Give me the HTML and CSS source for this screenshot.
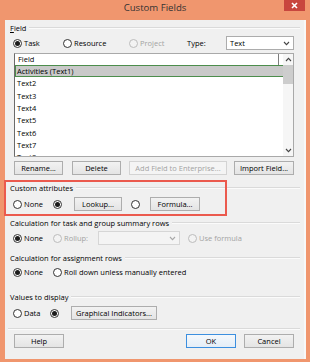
FILE: index.html
```html
<!DOCTYPE html>
<html>
<head>
<meta charset="utf-8">
<title>Custom Fields</title>
<link rel="stylesheet" href="styles.css">
</head>
<body>
<div class="window">
  <div class="titlebar">
    <span></span>
    <span class="title">Custom Fields</span>
    <span class="close"><svg width="7" height="7" viewBox="0 0 7 7"><path d="M1 1 L6 6 M6 1 L1 6" stroke="#fff" stroke-width="1.6" fill="none"/></svg></span>
  </div>
  <div class="dialog">
    <div class="head h-field"><span><u>F</u>ield</span><i class="line"></i></div>
    <div class="row r-field">
      <label class="opt w-task"><span class="radio on"></span>Task</label>
      <label class="opt w-res"><span class="radio"></span>Resource</label>
      <label class="opt w-proj dis"><span class="radio off"></span>Project</label>
      <span class="typelbl">Type:</span>
      <div class="select sel-type"><span>Text</span><svg width="7" height="5" viewBox="0 0 7 5"><polyline points="1,1 3.5,3.6 6,1" stroke="#444" stroke-width="1.1" fill="none"/></svg></div>
    </div>
    <div class="list">
      <div class="list-main">
        <div class="list-head"><span>Field</span></div>
        <div class="item sel">Activities (Text1)</div>
        <div class="item">Text2</div>
        <div class="item">Text3</div>
        <div class="item">Text4</div>
        <div class="item">Text5</div>
        <div class="item">Text6</div>
        <div class="item">Text7</div>
        <div class="item">Text8</div>
      </div>
      <div class="sb">
        <div class="sb-btn"><svg width="7" height="5" viewBox="0 0 7 5"><polyline points="1,4 3.5,1.4 6,4" stroke="#444" stroke-width="1.1" fill="none"/></svg></div>
        <div class="sb-thumb"></div>
        <div class="sb-track"></div>
        <div class="sb-btn"><svg width="7" height="5" viewBox="0 0 7 5"><polyline points="1,1 3.5,3.6 6,1" stroke="#444" stroke-width="1.1" fill="none"/></svg></div>
      </div>
    </div>
    <div class="row r-listbtns">
      <button class="btn b-rename">Rename...</button>
      <button class="btn b-delete">Delete</button>
      <button class="btn b-add dis-btn">Add Field to Enterprise...</button>
      <button class="btn b-import">Import Field...</button>
    </div>
    <div class="custom">
      <div class="head"><span>Custom attributes</span><i class="line"></i></div>
      <div class="row r-custom">
        <label class="opt w-none"><span class="radio"></span>None</label>
        <label class="opt w-ronly"><span class="radio on"></span></label>
        <button class="btn b-lookup">Lookup...</button>
        <label class="opt w-ronly2"><span class="radio"></span></label>
        <button class="btn b-formula">Formula...</button>
      </div>
      <div class="highlight"></div>
    </div>
    <div class="head h-calc"><span>Calculation for task and group summary rows</span><i class="line"></i></div>
    <div class="row r-calc">
      <label class="opt w-none"><span class="radio on"></span>None</label>
      <label class="opt w-rollup dis"><span class="radio off"></span>Rollup:</label>
      <div class="select sel-rollup"><span></span><svg width="7" height="5" viewBox="0 0 7 5"><polyline points="1,1 3.5,3.6 6,1" stroke="#a8a8a8" stroke-width="1.1" fill="none"/></svg></div>
      <label class="opt w-useform dis"><span class="radio off"></span>Use formula</label>
    </div>
    <div class="head h-assign"><span>Calculation for assignment rows</span><i class="line"></i></div>
    <div class="row r-assign">
      <label class="opt w-none"><span class="radio on"></span>None</label>
      <label class="opt"><span class="radio"></span>Roll down unless manually entered</label>
    </div>
    <div class="head h-values"><span>Values to display</span><i class="line"></i></div>
    <div class="row r-values">
      <label class="opt w-data"><span class="radio"></span>Data</label>
      <label class="opt w-ronly"><span class="radio on"></span></label>
      <button class="btn b-graph">Graphical Indicators...</button>
    </div>
    <div class="sep"></div>
    <div class="row r-bottom">
      <button class="btn b-help">Help</button>
      <button class="btn b-ok">OK</button>
      <button class="btn b-cancel">Cancel</button>
    </div>
  </div>
</div>
</body>
</html>
```
FILE: styles.css
```css
* { box-sizing: border-box; }
html, body { margin: 0; padding: 0; }
body {
  width: 310px;
  height: 362px;
  overflow: hidden;
  background: #f0966e;
  font-family: "Open Sans", "Noto Sans", sans-serif;
  font-size: 7.5px;
  color: #000;
}
.window {
  width: 310px;
  height: 362px;
  background: #f0966e;
  display: flex;
  flex-direction: column;
}
.titlebar {
  height: 20px;
  flex: none;
  display: grid;
  grid-template-columns: 1fr auto 1fr;
  align-items: start;
}
.title {
  font-size: 9.6px;
  line-height: 16px;
  color: #333;
}
.close {
  justify-self: end;
  width: 21px;
  height: 11px;
  margin-right: 5px;
  background: #c8463e;
  display: flex;
  align-items: center;
  justify-content: center;
}
.dialog {
  margin: 0 4px 0 5px;
  height: 339px;
  flex: none;
  background: #f0f0f0;
  padding: 0 6px 0 5px;
  box-shadow: inset -2px 0 0 #f8f8f8;
}
.head {
  display: flex;
  align-items: center;
  height: 12px;
  line-height: 12px;
  white-space: nowrap;
}
.head .line {
  flex: 1;
  height: 2px;
  margin-left: 3px;
  border-top: 1px solid #dadada;
  border-bottom: 1px solid #fbfbfb;
}
.h-field { margin-top: 2px; }
.h-calc { margin-top: 6px; }
.h-assign { margin-top: 7px; }
.h-values { margin-top: 12px; }

.row {
  display: flex;
  align-items: center;
  height: 14px;
  padding-left: 3px;
  white-space: nowrap;
}
.r-field { margin-top: 2px; }
.r-listbtns { margin-top: 4px; padding-left: 4px; }
.r-custom { margin-top: 3px; }
.r-calc { margin-top: 2px; }
.r-assign { margin-top: 1px; }
.r-values { margin-top: 3px; }
.r-bottom { margin-top: 4px; padding-left: 4px; padding-right: 6px; }

.opt {
  display: flex;
  align-items: center;
  gap: 2px;
  flex: none;
}
.dis { color: #a3a3a3; }
.radio {
  width: 9px;
  height: 9px;
  border-radius: 50%;
  border: 1px solid #333;
  background: #fff;
  flex: none;
  display: flex;
  align-items: center;
  justify-content: center;
}
.radio.on::after {
  content: "";
  width: 5px;
  height: 5px;
  border-radius: 50%;
  background: #1c1c1c;
}
.radio.off {
  border-color: #bcbcbc;
  background: #f3f3f3;
}
.w-task { width: 50px; }
.w-res { width: 66px; }
.w-proj { width: 58px; }
.typelbl { width: 39px; flex: none; }
.w-none { width: 40px; }
.w-ronly { width: 21px; }
.w-ronly2 { width: 19px; margin-left: 9px; }
.w-rollup { width: 45px; }
.w-useform { margin-left: 8px; }
.w-data { width: 37px; }

.select {
  display: flex;
  align-items: center;
  justify-content: space-between;
  height: 14px;
  flex: none;
  border: 1px solid #acacac;
  background: #fff;
  padding: 0 3px 0 3px;
}
.sel-type { width: 68px; }
.sel-rollup {
  width: 82px;
  background: #f4f4f4;
  border-color: #d6d6d6;
}

.list {
  margin: 3px 6px 0 4px;
  height: 104px;
  border: 1px solid #a9a9a9;
  border-left-color: #6b6b6b;
  background: #fff;
  display: grid;
  grid-template-columns: 1fr 10px;
  overflow: hidden;
}
.list-main { overflow: hidden; }
.list-head {
  height: 11px;
  line-height: 11px;
  padding-right: 4px;
}
.list-head span {
  display: block;
  padding-left: 3px;
  border-right: 1px solid #7d7d7d;
  border-bottom: 1px solid #ececec;
}
.item {
  height: 12.33px;
  line-height: 12.33px;
  padding-left: 2px;
  white-space: nowrap;
}
.item.sel {
  background: #c9c9c9;
  border: 1px solid #4c8d4c;
  border-right: none;
  padding-left: 1px;
  line-height: 10.33px;
}
.sb {
  background: #f6f6f6;
  display: flex;
  flex-direction: column;
}
.sb-btn {
  height: 11px;
  flex: none;
  display: flex;
  align-items: center;
  justify-content: center;
}
.sb-thumb {
  height: 19px;
  flex: none;
  background: #cdcdcd;
}
.sb-track { flex: 1; }

.btn {
  height: 14px;
  flex: none;
  border: 1px solid #adadad;
  background: linear-gradient(#f2f2f2, #e4e4e4);
  font: inherit;
  color: #000;
  padding: 0;
  margin: 0;
  display: flex;
  align-items: center;
  justify-content: center;
  white-space: nowrap;
}
.dis-btn {
  color: #a3a3a3;
  border-color: #d3d3d3;
  background: #f4f4f4;
}
.b-rename { width: 49px; }
.b-delete { width: 49px; margin-left: 9px; }
.b-add { width: 98px; margin-left: 8px; }
.b-import { width: 60px; margin-left: 7px; }
.b-lookup { width: 48px; }
.b-formula { width: 50px; }
.b-graph { width: 86px; }
.b-help { width: 50px; }
.b-ok {
  width: 50px;
  margin-left: auto;
  border-color: #3c8fdf;
  background: linear-gradient(#f4f8fc, #e5eef7);
}
.b-cancel { width: 50px; margin-left: 8px; }

.custom {
  position: relative;
  margin-top: 7px;
}
.highlight {
  position: absolute;
  top: -2px;
  left: -6px;
  width: 223px;
  height: 36px;
  border: 2px solid #eb5a4e;
  pointer-events: none;
}
.sep {
  margin: 8px 0 0 -2px;
  height: 2px;
  border-top: 1px solid #dadada;
  border-bottom: 1px solid #fbfbfb;
}
```
